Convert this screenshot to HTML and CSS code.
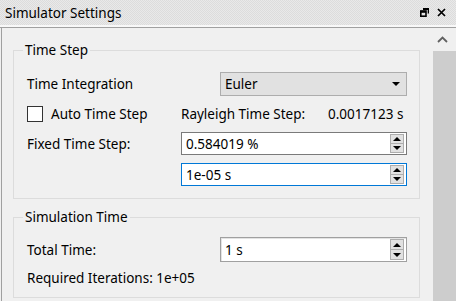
FILE: index.html
```html
<!DOCTYPE html>
<html lang="en">
<head>
    <meta charset="UTF-8">
    <title>Simulator Settings</title>
    <link rel="stylesheet" href="styles.css">
</head>
<body>
    <div class="dock">
        <div class="titlebar">
            <span class="title">Simulator Settings</span>
            <div class="title-buttons">
                <svg class="icon-float" width="9" height="9" viewBox="0 0 9 9">
                    <path d="M3 0.5h5.5v5" fill="none" stroke="#000" stroke-width="1.6"/>
                    <rect x="0.8" y="3" width="5.2" height="5.2" fill="none" stroke="#000" stroke-width="1.6"/>
                    <path d="M3 1h5.5" stroke="#000" stroke-width="2"/>
                    <path d="M1 3.8h5" stroke="#000" stroke-width="2"/>
                </svg>
                <svg class="icon-close" width="9" height="9" viewBox="0 0 9 9">
                    <path d="M1 1L8 8M8 1L1 8" stroke="#000" stroke-width="1.7"/>
                </svg>
            </div>
        </div>
        <div class="frame">
            <div class="content">
                <fieldset class="group group-step">
                    <legend>Time Step</legend>
                    <div class="row row-combo">
                        <span class="label label-wide">Time Integration</span>
                        <div class="combo">
                            <span>Euler</span>
                            <span class="combo-arrow"></span>
                        </div>
                    </div>
                    <div class="row row-check">
                        <label class="check"><span class="checkbox"></span>Auto Time Step</label>
                        <span class="rayleigh-label">Rayleigh Time Step:</span>
                        <span class="rayleigh-value">0.0017123 s</span>
                    </div>
                    <div class="row row-spin">
                        <span class="label label-narrow">Fixed Time Step:</span>
                        <div class="spin">
                            <span class="spin-text">0.584019 %</span>
                            <div class="spin-buttons">
                                <span class="spin-btn"><span class="arrow-up"></span></span>
                                <span class="spin-btn"><span class="arrow-down"></span></span>
                            </div>
                        </div>
                    </div>
                    <div class="row row-spin row-second">
                        <span class="label label-narrow"></span>
                        <div class="spin spin-focus">
                            <span class="spin-text">1e-05 s</span>
                            <div class="spin-buttons">
                                <span class="spin-btn"><span class="arrow-up"></span></span>
                                <span class="spin-btn"><span class="arrow-down"></span></span>
                            </div>
                        </div>
                    </div>
                </fieldset>

                <fieldset class="group group-time">
                    <legend>Simulation Time</legend>
                    <div class="row row-total">
                        <span class="label label-wide">Total Time:</span>
                        <div class="spin spin-plain">
                            <span class="spin-text">1 s</span>
                            <div class="spin-buttons">
                                <span class="spin-btn"><span class="arrow-up"></span></span>
                                <span class="spin-btn"><span class="arrow-down"></span></span>
                            </div>
                        </div>
                    </div>
                    <div class="row row-info">
                        <span class="label">Required Iterations: 1e+05</span>
                    </div>
                </fieldset>
            </div>
            <div class="scrollbar">
                <div class="scroll-up">
                    <svg width="11" height="7" viewBox="0 0 11 7">
                        <path d="M1 6L5.5 1.5L10 6" fill="none" stroke="#606060" stroke-width="1.8"/>
                    </svg>
                </div>
                <div class="scroll-thumb"></div>
            </div>
        </div>
    </div>
</body>
</html>
```

FILE: styles.css
```css
body {
    margin: 0;
    font-family: "Noto Sans", "Open Sans", sans-serif;
    font-size: 13.5px;
    color: #000;
    background-color: #f0f0f0;
    width: 456px;
    height: 301px;
    overflow: hidden;
}

.dock {
    display: flex;
    flex-direction: column;
    height: 301px;
}

.titlebar {
    height: 25px;
    display: flex;
    align-items: center;
    justify-content: space-between;
    padding: 0 10px 0 5px;
    background: repeating-conic-gradient(#e9e9e9 0 25%, #dcdcdc 0 50%) 0 0 / 2px 2px;
    border-bottom: 2px solid #f8f8f8;
}

.title {
    line-height: 16px;
}

.title-buttons {
    display: flex;
    align-items: center;
    gap: 8px;
}

.frame {
    flex: 1;
    display: flex;
    border-top: 1px solid #a0a0a0;
}

.content {
    flex: 1;
    margin-left: 1px;
    border-left: 1px solid #a0a0a0;
    padding: 14px 13px 0 11px;
}

.scrollbar {
    width: 23px;
    display: flex;
    flex-direction: column;
    background-color: #f0f0f0;
}

.scroll-up {
    height: 23px;
    display: flex;
    align-items: center;
    justify-content: center;
    padding-right: 4px;
}

.scroll-thumb {
    flex: 1;
    background-color: #cdcdcd;
}

.group {
    margin: 0;
    border: 1px solid #dcdcdc;
    padding: 14px 12px 12px 13px;
}

.group legend {
    padding: 0 2px;
    margin-left: -4px;
    line-height: 16px;
}

.group-time {
    margin-top: 10px;
    padding-top: 12px;
    padding-bottom: 11px;
}

.row {
    display: flex;
    align-items: center;
}

.row-combo {
    height: 24px;
}

.row-check {
    height: 16px;
    margin-top: 10px;
}

.row-spin {
    height: 23px;
    margin-top: 10px;
}

.row-second {
    margin-top: 8px;
}

.row-total {
    height: 25px;
}

.row-info {
    height: 16px;
    margin-top: 8px;
}

.label {
    line-height: 16px;
}

.label-wide {
    width: 193px;
    flex-shrink: 0;
}

.label-narrow {
    width: 154px;
    flex-shrink: 0;
}

.combo {
    flex: 1;
    height: 100%;
    box-sizing: border-box;
    display: flex;
    align-items: center;
    justify-content: space-between;
    padding: 0 6px 0 4px;
    background-color: #e1e1e1;
    border: 1px solid #adadad;
}

.combo-arrow {
    width: 0;
    height: 0;
    border-left: 4px solid transparent;
    border-right: 4px solid transparent;
    border-top: 4px solid #000;
}

.check {
    width: 154px;
    display: flex;
    align-items: center;
    flex-shrink: 0;
}

.checkbox {
    width: 14px;
    height: 14px;
    border: 1px solid #333;
    background-color: #fff;
    margin-right: 8px;
}

.rayleigh-label {
    width: 147px;
    flex-shrink: 0;
}

.spin {
    flex: 1;
    height: 100%;
    box-sizing: border-box;
    display: flex;
    align-items: center;
    justify-content: space-between;
    padding: 1px 2px 1px 4px;
    background-color: #fff;
    border: 1px solid #7a7a7a;
}

.spin-focus {
    border-color: #0078d7;
}

.spin-plain {
    border: 1px solid #a0a0a0;
    box-shadow: inset 1px 1px 0 #e3e3e3;
}

.spin-buttons {
    display: flex;
    flex-direction: column;
    height: 100%;
    width: 14px;
}

.spin-btn {
    flex: 1;
    display: flex;
    align-items: center;
    justify-content: center;
    background-color: #e1e1e1;
    border: 1px solid #adadad;
}

.spin-btn + .spin-btn {
    border-top: none;
}

.arrow-up {
    width: 0;
    height: 0;
    border-left: 4px solid transparent;
    border-right: 4px solid transparent;
    border-bottom: 4px solid #000;
}

.arrow-down {
    width: 0;
    height: 0;
    border-left: 4px solid transparent;
    border-right: 4px solid transparent;
    border-top: 4px solid #000;
}
```
